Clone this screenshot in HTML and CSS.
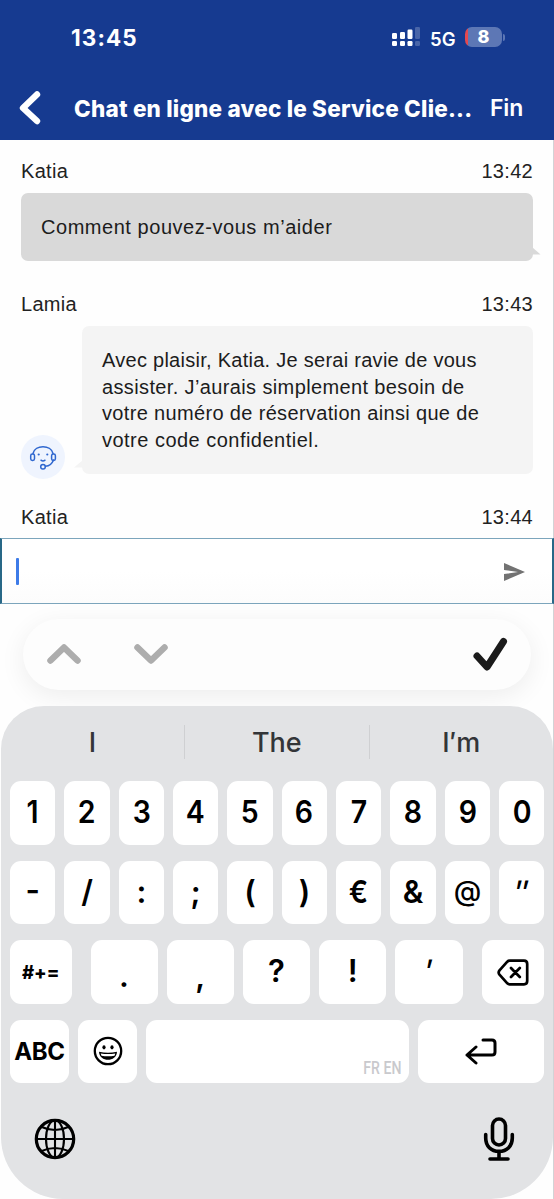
FILE: index.html
```html
<!DOCTYPE html>
<html lang="fr">
<head>
<meta charset="utf-8">
<title>Chat en ligne</title>
<link rel="stylesheet" href="styles.css">
</head>
<body>
<div class="phone">
  <header class="header">
    <div class="status">
      <span class="clock">13:45</span>
      <div class="status-right">
        <svg class="signal" width="29" height="20" viewBox="0 0 29 20" fill="#fff">
          <rect x="0" y="6" width="5" height="6" rx="1.2"/><rect x="8" y="5" width="5" height="7" rx="1.2"/><rect x="15.5" y="2.5" width="5" height="9.500" rx="1.2"/><rect x="23" y="0" width="5" height="12" rx="1.2" opacity=".22"/>
          <rect x="0" y="14" width="5" height="5" rx="1.2"/><rect x="8" y="14" width="5" height="5" rx="1.2"/><rect x="15.500" y="14" width="5" height="5" rx="1.2"/><rect x="23" y="14" width="5" height="5" rx="1.2" opacity=".22"/>
        </svg>
        <span class="network">5G</span>
        <span class="battery">8</span>
        <span class="battery-tip"></span>
      </div>
    </div>
    <div class="titlebar">
      <svg class="back" width="26" height="36" viewBox="0 0 26 36"><path d="M21 4.500 7 18 21 31" fill="none" stroke="#fff" stroke-width="6.400" stroke-linecap="round" stroke-linejoin="round"/></svg>
      <h1 class="title">Chat en ligne avec le Service Clie...</h1>
      <span class="end">Fin</span>
    </div>
  </header>

  <main class="chat">
    <div class="meta"><span>Katia</span><span class="time">13:42</span></div>
    <div class="bubble mine">Comment pouvez-vous m’aider
      <svg class="tail-right" width="9" height="8" viewBox="0 0 9 8"><path d="M0 0 8.500 7.500H0z" fill="#d9d9d9"/></svg>
    </div>
    <div class="meta meta-agent"><span>Lamia</span><span class="time">13:43</span></div>
    <div class="agent-row">
      <svg class="avatar" width="44" height="44" viewBox="0 0 44 44" fill="none" stroke="#2f67cf" stroke-width="1.500" stroke-linecap="round">
        <circle cx="22" cy="22" r="22" fill="#eff4fe" stroke="none"/>
        <path d="M12 18.500C14 9.500 30 9.500 32 18.500M32.500 25c-1.500 4-4 6-8 6.300"/>
        <rect x="9.700" y="19" width="3.800" height="6.500" rx="1.700"/><rect x="30.600" y="19" width="3.800" height="6.500" rx="1.700"/>
        <circle cx="22" cy="31.800" r="2.300"/><path d="M20 25.200c1.200 1 2.800 1 4 0"/>
        <g fill="#2f67cf" stroke="none"><circle cx="17.700" cy="19.500" r="1.100"/><circle cx="26.300" cy="19.500" r="1.100"/></g>
      </svg>
      <div class="bubble agent">
        <svg class="tail-left" width="9" height="8" viewBox="0 0 9 8"><path d="M9 0 0 7.500H9z" fill="#f4f4f4"/></svg>
        <span class="l1">Avec plaisir, Katia. Je serai ravie de vous</span><br><span class="l2">assister. J’aurais simplement besoin de</span><br><span class="l3">votre numéro de réservation ainsi que de</span><br><span class="l4">votre code confidentiel.</span>
      </div>
    </div>
    <div class="meta meta-last"><span>Katia</span><span class="time">13:44</span></div>
  </main>

  <div class="composer">
    <span class="caret"></span>
    <svg class="send" width="21" height="18" viewBox="0 0 21 18"><path d="M0 0 21 9 0 18V11L14 9 0 7z" fill="#727272"/></svg>
  </div>

  <div class="accessory">
    <div class="pill">
      <svg width="36" height="24" viewBox="0 0 36 24" class="arrow"><path d="M4.500 18.500 18 5.500 31.500 18.500"/></svg>
      <svg width="36" height="24" viewBox="0 0 36 24" class="arrow arrow-down"><path d="M4.500 5.500 18 18.500 31.500 5.500"/></svg>
      <svg width="36" height="36" viewBox="0 0 36 36" class="check"><path d="M5 20 15 31 31.500 5.500"/></svg>
    </div>
  </div>

  <section class="keyboard">
    <div class="suggestions"><span>I</span><span>The</span><span>I′m</span></div>
    <div class="keys row-ten">
      <b><i>1</i></b><b><i>2</i></b><b><i>3</i></b><b><i>4</i></b><b><i>5</i></b><b><i>6</i></b><b><i>7</i></b><b><i>8</i></b><b><i>9</i></b><b><i>0</i></b>
    </div>
    <div class="keys row-ten symbols">
      <b class="raised">-</b><b>/</b><b>:</b><b>;</b><b>(</b><b>)</b><b><i>€</i></b><b>&amp;</b><b class="at">@</b><b><i class="oblique">″</i></b>
    </div>
    <div class="keys row-punct">
      <b class="small">#+=</b><b class="gap-left low">.</b><b class="low">,</b><b>?</b><b>!</b><b><i class="oblique">′</i></b>
      <b class="gap-left icon"><svg width="32" height="27" viewBox="0 0 32 27" fill="none" stroke="#000" stroke-width="2.700" stroke-linecap="round" stroke-linejoin="round"><path d="M12.500 1.700H27Q30.200 1.700 30.200 4.900V22.100Q30.200 25.300 27 25.300H12.500Q11.300 25.300 10.300 24.300L2.500 15.700Q.8 13.500 2.500 11.300L10.300 2.700Q11.300 1.700 12.500 1.700zM14 9l8.800 9M22.800 9 14 18"/></svg></b>
    </div>
    <div class="keys row-space">
      <b class="abc">ABC</b>
      <b><svg width="30" height="30" viewBox="0 0 30 30"><circle cx="15" cy="15" r="13.200" fill="none" stroke="#000" stroke-width="2.300"/><ellipse cx="11" cy="11.300" rx="1.600" ry="2.100"/><ellipse cx="19" cy="11.300" rx="1.600" ry="2.100"/><path d="M6 15.800Q15 17.800 24 15.800C23.500 26.500 6.500 26.500 6 15.800z"/><path d="M7.700 17.400Q15 18.800 22.300 17.400L21.500 19.700Q15 20.800 8.500 19.700z" fill="#fff"/></svg></b>
      <b class="space"><span class="languages">FR EN</span></b>
      <b class="icon"><svg width="32" height="28" viewBox="0 0 32 28" fill="none" stroke="#000" stroke-width="3" stroke-linecap="round" stroke-linejoin="round"><path d="M18 2H27Q30 2 30 5V14Q30 17 27 17H2M11 9 2 17 11 25"/></svg></b>
    </div>
    <div class="bottom">
      <svg width="42" height="42" viewBox="0 0 42 42" fill="none" stroke="#000" stroke-width="2.100"><circle cx="21" cy="21" r="18.700" stroke-width="3.200"/><ellipse cx="21" cy="21" rx="9" ry="18.700"/><path d="M21 2v38M2 21h38M6.500 8.500Q21 15.500 35.500 8.500M6.500 33.500Q21 26.500 35.500 33.500"/></svg>
      <svg width="32" height="44" viewBox="0 0 32 44" fill="none" stroke="#000" stroke-width="3.600" stroke-linecap="round" stroke-linejoin="round"><rect x="9.500" y="2" width="13" height="26" rx="6.500"/><path d="M2.700 17.500v3.500c0 8 5.300 13.300 13.300 13.300S29.300 29 29.300 21V17.500M16 34.500v7M7 42H25"/></svg>
    </div>
  </section>
</div>
</body>
</html>
```
FILE: styles.css
```css
* { box-sizing: border-box; }
body { margin: 0; background: #fefefe; font-family: "Liberation Sans", Arial, sans-serif; color: #222; }
.phone { width: 554px; height: 1199px; display: flex; flex-direction: column; overflow: hidden; white-space: nowrap; background: linear-gradient(90deg, #fefefe 553px, #d2d3d6 553px); }
svg { display: block; flex: none; }

.header { height: 140px; background: #163a90; color: #fff; font-family: Inter, sans-serif; flex: none; }
.status { height: 76px; display: flex; justify-content: space-between; padding: 0 49px 0 71px; }
.clock { font-size: 22.5px; line-height: 28px; font-weight: 700; padding-top: 24px; letter-spacing: 1.1px; }
.status-right { display: flex; align-items: flex-start; padding-top: 27px; }
.network { font-size: 18.500px; line-height: 24px; font-weight: 600; margin-left: 9px; width: 35px; }
.battery { width: 37px; height: 20px; border-radius: 7px; background: linear-gradient(90deg, #e5484f 3px, #5d77b5 3px); font-size: 18px; font-weight: 800; line-height: 20px; text-align: center; }
.battery-tip { width: 2px; height: 7px; margin: 7px 0 0 1px; border-radius: 0 2px 2px 0; background: #5d77b5; }
.titlebar { display: flex; align-items: center; height: 64px; padding: 0 31px 0 16px; }
.title { font-size: 22.5px; line-height: 30px; font-weight: 800; margin: 2px 0 0 32px; letter-spacing: .22px; width: 416px; }
.end { font-size: 23px; line-height: 30px; font-weight: 600; letter-spacing: -.2px; }

.chat { height: 398px; flex: none; padding: 19px 21px 0; font-size: 20px; }
.meta { display: flex; justify-content: space-between; height: 24px; line-height: 24px; letter-spacing: .3px; }
.bubble { border-radius: 7px; position: relative; color: #1c1c1c; }
.mine { height: 68px; margin-top: 10px; padding-left: 20px; line-height: 68px; background: #d9d9d9; letter-spacing: .54px; }
.tail-right { position: absolute; right: -8px; bottom: 6px; }
.meta-agent { margin-top: 31px; }
.agent-row { display: flex; align-items: flex-end; margin-top: 10px; height: 153px; gap: 17px; }
.agent { flex: 1; height: 148px; margin-bottom: 5px; padding: 21px 20px; background: #f4f4f4; line-height: 26.600px; }
.l1 { letter-spacing: .27px; }
.l2 { letter-spacing: .37px; }
.l3 { letter-spacing: .34px; }
.l4 { letter-spacing: .48px; }
.tail-left { position: absolute; left: -8px; bottom: 6px; }
.meta-last { margin-top: 26px; }

.composer { height: 66px; flex: none; display: flex; align-items: center; justify-content: space-between; padding: 1px 27px 0 14px; border: 1px solid #7ca5bc; border-left: 2px solid #286887; border-right: 2px solid #286887; background: linear-gradient(#fff 50%, #fcfcfc); }
.caret { width: 3px; height: 27px; border-radius: 1px; background: #3d7be8; }

.accessory { height: 102px; flex: none; padding: 14.500px 23px 0; }
.pill { height: 71px; border-radius: 36px; background: #fdfdfd; box-shadow: 0 6px 26px rgba(0,0,0,.07); display: flex; align-items: center; padding: 0 23px 1px; }
.arrow, .check { fill: none; stroke: #adadad; stroke-width: 6.500; stroke-linecap: round; stroke-linejoin: round; }
.arrow-down { margin-left: 51px; }
.check { margin-left: auto; stroke: #1b1b1b; stroke-width: 7; }

.keyboard { height: 493px; flex: none; margin: 0 1px; padding: 0 8.500px 0 9px; border-radius: 43px 43px 62px 62px; background: #e2e3e5; font-family: Inter, sans-serif; }
.suggestions { height: 75px; display: grid; grid-template-columns: 183px 184.500px 184.500px; align-items: center; margin: 0 -8.500px 0 -9px; padding-bottom: 4px; color: #333538; font-size: 27px; font-weight: 500; }
.suggestions span { text-align: center; height: 34px; line-height: 35px; }
.suggestions span + span { border-left: 1.500px solid #cfd0d2; }
.keys { display: grid; column-gap: 9px; height: 63.600px; margin-bottom: 16px; }
.keys b { display: flex; align-items: center; justify-content: center; background: #fff; border-radius: 11px; color: #000; font-size: 31px; line-height: 1; font-weight: 600; padding-bottom: 2px; }
.keys i { font-style: normal; transform: scaleX(.92); }
.keys .oblique { transform: skewX(-6deg) scaleX(.85); }
.row-ten { grid-template-columns: repeat(10, 1fr); }
.keys .at { font-weight: 500; font-size: 28px; }
.keys .raised { padding-bottom: 6px; }
.row-punct { grid-template-columns: 61.500px 77px 67.300px 67.300px 67.300px 67.300px 72.500px; }
.keys .gap-left { margin-left: 10px; }
.keys .small { font-size: 18.500px; font-weight: 800; padding: 0; }
.keys .low { padding: 7px 0 0; }
.keys .icon { padding: 1px 0 0 1px; }
.row-space { grid-template-columns: 59px 59px 262.500px 126.500px; }
.keys .abc { font-size: 24px; font-weight: 700; letter-spacing: -.3px; padding: 0; }
.keys .space { align-items: flex-end; justify-content: flex-end; padding: 0 7px 5px; }
.languages { color: #c9c9cd; font: 500 19px/21px Roboto, sans-serif; transform: scaleX(.74); transform-origin: right; }
.bottom { display: flex; justify-content: space-between; align-items: center; padding: 17.500px 30px 0 24px; }
```
